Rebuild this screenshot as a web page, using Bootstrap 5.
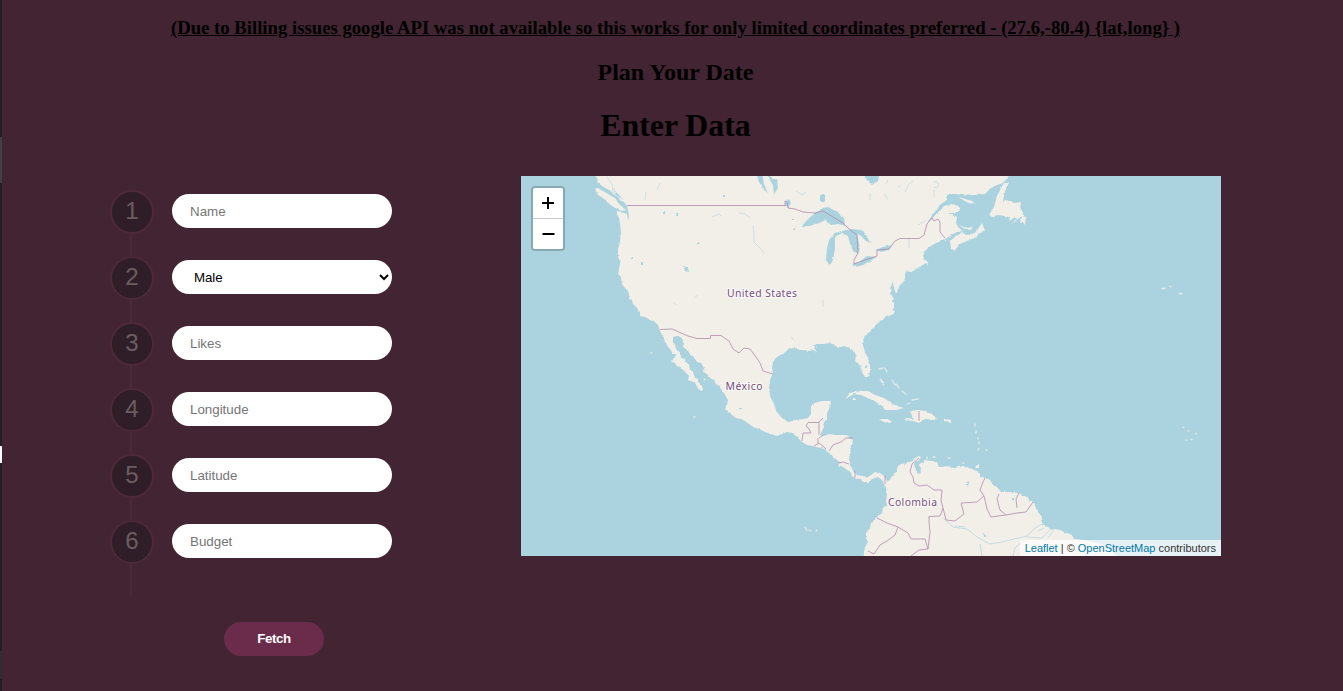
<!DOCTYPE html>
<html lang="en">
<head>
<meta charset="utf-8">
<meta name="viewport" content="width=device-width, initial-scale=1">
<title>Plan Your Date</title>
<link href="https://cdn.jsdelivr.net/npm/bootstrap@5.3.0/dist/css/bootstrap.min.css" rel="stylesheet">
<style>
  body { background:#422432; color:#000; font-family:"Liberation Serif",serif; overflow:hidden; height:691px; }
  .edge { width:2px; background:#231f22; flex:none; }
  .edge .grip { height:46px; margin-top:137px; background:#424142; }
  .edge .mark-on { height:17px; margin-top:263px; background:#fff; }
  .edge .foot { height:28px; margin-top:188px; background:#302d2f; }
  .page { padding:17px 0 0 6px; }
  h1,h2,h3 { font-weight:700; margin:0; line-height:normal; }
  h3 { font-size:18.72px; line-height:21px; text-decoration:underline; }
  h2 { font-size:24px; line-height:27px; margin-top:21px; }
  h1 { font-size:31.8px; line-height:36px; margin-top:22px; }
  .planner { margin-top:32px; padding-left:102px; }
  .entry { width:411px; padding-top:14px; flex:none; font-family:"Liberation Sans",Arial,sans-serif; }
  .step { height:66px; }
  .num-col { width:44px; flex:none; }
  .num { width:44px; height:44px; border:2px solid #4e293b; background:#2f1e28; color:#6b5d61; font-size:24px; line-height:38px; text-align:center; flex:none; }
  .rail { width:2px; margin-left:20px; background:#4b283a; }
  .field { width:220px; height:34px; margin:4px 0 0 18px; border:0; border-radius:17px; padding:1px 18px; font-size:13.333px; background:#fff; color:#000; line-height:normal; }
  .field::placeholder { color:#757575; opacity:1; }
  select.field { padding:1px 0 1px 18px; letter-spacing:-.1px; }
  .fetch { width:100px; height:34px; margin:25px 0 0 114px; border:0; border-radius:17px; background:#6b2b4a; color:#fff; font-size:13.333px; font-weight:700; letter-spacing:-.4px; padding:0; }
  .map { width:700px; height:380px; background:#aad3df; flex:none; font-family:"Liberation Sans",Arial,sans-serif; }
  .zoomer { top:10px; left:10px; width:34px; border:2px solid rgba(0,0,0,.2); border-radius:4px; background-clip:padding-box; overflow:hidden; }
  .zoomer div { height:30px; background:#fff; }
  .zoomer div:first-child { height:31px; border-bottom:1px solid #ccc; }
  .credit { right:0; bottom:0; background:rgba(255,255,255,.7); color:#333; font-size:11px; line-height:16px; padding:0 5px; white-space:nowrap; }
  .credit a { color:#0078a8; text-decoration:none; }
</style>
</head>
<body class="d-flex">
<div class="edge"><div class="grip"></div><div class="mark-on"></div><div class="foot"></div></div>
<main class="page flex-grow-1">
  <header class="text-center">
    <h3>(Due to Billing issues google API was not available so this works for only limited coordinates preferred - (27.6,-80.4) {lat,long} )</h3>
    <h2>Plan Your Date</h2>
    <h1>Enter Data</h1>
  </header>
  <div class="planner d-flex">
    <form class="entry" onsubmit="return false">
      <div class="step d-flex"><div class="num-col d-flex flex-column"><div class="num rounded-circle">1</div><div class="rail flex-grow-1"></div></div><input class="field" placeholder="Name"></div>
      <div class="step d-flex"><div class="num-col d-flex flex-column"><div class="num rounded-circle">2</div><div class="rail flex-grow-1"></div></div><select class="field"><option>Male</option><option>Female</option></select></div>
      <div class="step d-flex"><div class="num-col d-flex flex-column"><div class="num rounded-circle">3</div><div class="rail flex-grow-1"></div></div><input class="field" placeholder="Likes"></div>
      <div class="step d-flex"><div class="num-col d-flex flex-column"><div class="num rounded-circle">4</div><div class="rail flex-grow-1"></div></div><input class="field" placeholder="Longitude"></div>
      <div class="step d-flex"><div class="num-col d-flex flex-column"><div class="num rounded-circle">5</div><div class="rail flex-grow-1"></div></div><input class="field" placeholder="Latitude"></div>
      <div class="step d-flex"><div class="num-col d-flex flex-column"><div class="num rounded-circle">6</div><div class="rail flex-grow-1"></div></div><input class="field" placeholder="Budget"></div>
      <div class="d-flex"><div class="rail" style="height:11px"></div></div>
      <button class="fetch d-block">Fetch</button>
    </form>
    <div class="map position-relative">
      <svg class="d-block" width="700" height="380" viewBox="521 176 700 380">
        <!-- roughens the coastlines -->
        <filter id="coast" filterUnits="userSpaceOnUse" x="521" y="166" width="700" height="400" color-interpolation-filters="sRGB">
          <feTurbulence type="fractalNoise" baseFrequency=".28" numOctaves="2" seed="4"/>
          <feDisplacementMap in="SourceGraphic" scale="2.500" xChannelSelector="R" yChannelSelector="G"/>
        </filter>
        <g filter="url(#coast)">
        <!-- mainland -->
        <path fill="#f2efe9" d="M593 166L595 176 598 179 597 182 601 185 605 188 609 190 613 194 618 197 621 201 624 202 627 206 628 210 629 217 628 220 627 214 623 212 617 211 617 214 619 218 620 224 621 233 620 241 618 250 618 256 620 263 619 269 618 274 621 277 622 284 625 288 629 293 629 299 632 300 633 304 637 308 640 313 640 316 645 317 649 319 654 321 658 325 660 331 663 337 666 343 668 347 671 350 672 353 676 355 675 357 671 361 675 363 677 366 682 369 687 373 689 376 688 380 692 382 695 382 697 387 701 391 703 390 702 386 698 382 698 379 695 378 693 372 690 369 689 365 686 362 685 359 680 357 680 353 676 349 675 345 673 342 673 337 677 336 682 338 683 342 683 346 687 350 690 354 694 357 697 362 701 363 704 368 703 372 707 374 710 378 714 380 717 384 721 389 725 395 728 400 727 405 725 408 729 412 732 415 736 418 743 420 748 423 753 427 759 429 765 432 771 434 777 436 782 434 787 432 793 433 798 438 802 442 807 445 813 446 820 448 825 449 828 452 832 455 834 459 838 462 839 467 843 467 847 470 851 472 852 476 856 479 860 478 863 482 867 482 868 484 870 480 875 478 878 477 882 480 884 484 886 488 887 495 886 501 887 505 883 508 882 513 877 517 873 521 871 523 870 528 866 533 866 538 868 542 865 547 864 553 863 566H1117L1117 556 1106 547 1097 543 1083 540 1074 539 1072 535 1066 533 1060 530 1055 529 1051 530 1048 527 1042 525 1042 517 1038 512 1035 506 1033 502 1025 496 1018 493 1010 492 1001 492 997 487 993 485 990 480 986 478 980 477 979 472 972 469 964 466 954 468 947 466 942 467 939 467 937 462 931 461 925 460 921 463 917 466 918 472 921 471 920 474 917 472 915 468 914 464 919 460 921 457 918 456 915 459 911 461 908 463 901 464 897 467 897 472 892 476 890 480 887 481 884 476 880 473 875 472 871 475 868 477 862 476 857 475 853 471 851 466 849 459 850 453 851 446 853 440 849 438 847 435 843 435 836 435 829 434 824 436 820 435 822 431 824 427 823 423 827 420 827 413 829 409 830 403 832 401 828 401 822 401 814 403 811 407 811 414 808 418 804 419 796 420 788 422 782 418 777 412 773 402 770 396 769 388 770 380 773 373 772 368 773 362 777 357 784 353 788 349 794 348 800 350 804 350 809 351 813 350 817 352 814 348 817 346 812 346 817 344 823 344 830 343 834 345 839 348 844 346 849 348 853 351 856 355 855 361 860 365 862 372 865 377 869 377 870 372 870 366 868 358 865 352 863 345 863 340 866 335 872 330 877 324 879 321 883 320 886 316 892 315 895 311 892 310 894 308 894 303 892 301 894 299 892 296 890 291 892 291 890 287 892 284 892 281 894 287 895 292 897 293 899 287 901 284 905 280 905 275 906 271 913 269 920 267 926 263 928 266 927 261 924 260 923 256 925 251 929 247 936 243 944 240 951 235 957 232 963 231 958 227 956 223 957 217 955 216 952 215 948 213 953 213 959 212 960 208 957 205 951 204 944 206 937 213 930 221 927 223 933 214 941 204 947 200 947 195 951 194 961 194 973 195 985 194 991 188 997 185 1003 183 1009 176V166Z"/>
        <!-- islands -->
        <g fill="#f2efe9">
          <path d="M1009 183L1004 183 1001 188 997 196 994 207 989 215 992 217 998 215 1005 216 1010 217 1009 221 1015 217 1016 219 1011 224 1018 219 1022 216 1020 223 1023 222 1025 225 1026 217 1023 216 1023 211 1020 209 1021 202 1013 203 1008 200 1003 202 1004 195 1006 188Z"/>
          <path d="M950 241L956 236 961 233 967 235 975 233 982 223 984 228 985 231 978 234 977 237 967 241 960 244 955 250 951 249Z"/>
          <path d="M959 197L965 199 972 201 975 204 969 203 963 200ZM960 225L966 228 973 227 970 230 963 228Z"/>
          <path d="M595 189L598 188 608 194 615 198 620 205 626 210 622 211 615 208 608 203 603 198 598 195Z"/>
          <path d="M904 271L911 269 919 268 911 272Z"/>
          <path d="M845 399L850 393 859 391 868 391 875 395 884 398 891 403 897 406 904 408 896 410 885 410 882 406 876 402 868 398 861 395 854 394Z"/>
          <path d="M903 420L909 418 914 420 910 411 918 410 926 411 932 414 937 419 933 420 925 419 919 423 913 421Z"/>
          <path d="M880 419L887 419 892 421 890 423 883 422ZM944 419L952 420 951 422 944 421ZM976 466L979 464 979 468 975 468ZM880 378L883 381 885 386 881 382ZM853 398h3v2h-3Z"/>
        </g>
        <!-- lakes and bays -->
        <g fill="#aad3df">
          <path d="M802 226L809 218 818 211 823 208 828 207 836 211 844 218 845 226 838 224 831 225 826 220 819 223 810 226Z"/>
          <path d="M829 239L835 233 842 231 851 229 860 230 864 232 868 239 872 243 866 241 860 235 857 234 860 248 858 254 853 251 850 244 848 236 842 233 835 237 835 248 833 260 829 265 826 260 827 249Z"/>
          <path d="M852 264L859 262 867 256 876 257 872 260 863 265 856 267ZM876 250L883 247 892 245 889 250 881 252ZM820 195q3-2 5 0v5q-2 3-5 1ZM863 170h16v6l-1 5-6 4-5-5Z"/>
          <path d="M756 172l3 10 4 6 5 6-4-10-2-12ZM768 172l5 8 4-1 1 9-4 6-1-9-3-5Z"/>
          <path d="M683 265l5 3 1 4-4-1ZM784 205l5-6 2 4-3 5ZM613 187l3 5 8 8-8-5ZM917 463l4 5-1 6-4-3ZM834 457l4 4 3 3-5-2ZM966 483l3-2-1 6ZM983 534l5 2-4 1ZM1012 498h2v2h-2ZM865 366h2v2h-2ZM631 257h2v2h-2ZM641 262h2v3h-2ZM792 219h4v1h-4ZM793 228h2v2h-2ZM663 211h2v3h-2ZM676 213h2v3h-2ZM723 195h2v2h-2ZM697 242h2v2h-2ZM738 408h4v1h-4Z"/>
        </g>
        </g>
        <!-- small islands -->
        <path stroke="#f2efe9" stroke-width="1.3" fill="none" stroke-linecap="round" opacity=".8" d="M879 369l4-1M885 368l2 4M892 380l3 5M896 384l3 4M902 391l4 3M907 404l3-1M912 400l6-1M975 424v2M976 431v2M978 438v1M979 442v2M979 448l-1 2M986 450h1M963 463h1M948 458h2M927 457v2M933 457h2M805 527l2 3M809 530l2 1M816 531l1-1M1162 288.500h3M1170 286.500h1M1179 293.500h3M1183 427.500h1M1188 431h1M1196 433v1M1186 440h1M1191 439.500h1M704 380l1-1M694 417h1M651 353h1M658 323h2"/>
        <!-- rivers -->
        <g fill="none" stroke="#aad3df" stroke-width=".8" opacity=".65">
          <path d="M607 177l5 7 1 8 5 4M646 192l-1 8M657 190l3-7M712 217l7-3 2 2M739 213l6 1 5 4M753 225l1 10 0 7 7 7 3 5M796 191l6 4 4-3M905 192l4-8 4-3M884 193l4 7M934 183q3-4 4 1t-4 3M918 225l7-4M909 239v9M864 232l-4-3M823 300v7M674 303l2 2M694 298l4-3M791 337l4 4M870 193v7M888 180l-2 4M934 190v7M898 187l3-2"/>
          <path stroke-width="1" opacity="1" d="M943 518l10 9 14 2 10 8 13 7 12-2 12-3 13-3 8-8 7-4M955 526l10 1M980 544l2 12M1024 540l-9 8-2 8M1038 531l6-3M1050 530l-8 8-15-1M985 535l-3-2M1048 538l6-8"/>
        </g>
        <!-- country borders -->
        <g fill="none" stroke="#b38bad" stroke-width="1" opacity=".8">
          <path d="M627 205.500H785V201L787 202 788 208 795 209 803 212 815 213 823 211 833 217 843 223 848 228 857 235 858 253 854 260 854 264 865 260 877 256 877 250 889 249 895 241 900 238.500H919L924 235 927 224 932 218 934 221 938 219 940 222 940 232 945 238"/>
          <path d="M660 329.500L672 329 688 336 697 338.500H710.500V335.500H721L729 341 733 349 739 353 744 348 750 349 756 357 760 363 763 371 773 374"/>
          <path d="M802 441L803 433 811 433 809 429 806 426 808 422.500H819V435M819 422L823 418M819 438L823 435M814 446L819 443 824 447 826 449M818 438L818 443M829 451L833 445 841 442 846 438 853 438M838 463L843 462 849 464M855 471V478M885 476L885 484M919 411V421"/>
          <path d="M919 458L912 464 910 472 913 477 914 483 919 486 927 485 934 490H942L941 500 943 508 940 516 929 516.500V522L930 532 928 549 919 550 911 556M943 508L946 520 955 521 964 514 961 503 977 502 984 496 980 490 983 482 985 478M984 496L987 509 991 517 1006 515 1017 513 1026 512 1033 502M999 494L997 499 1000 510 1006 515M1019 493L1016 499 1017 508M877 518L887 523 898 527 908 533 911 539 925 539 928 549M898 527L895 535 887 541 880 545 874 554 868 551"/>
        </g>
        <g font-family="'Noto Sans','Open Sans',sans-serif" font-size="10.400" fill="#754c79" stroke="#fff" stroke-opacity=".75" stroke-width="2" paint-order="stroke" stroke-linejoin="round">
          <text x="727" y="297" textLength="70">United States</text>
          <text x="725.500" y="390" textLength="37">México</text>
          <text x="888" y="506" textLength="49">Colombia</text>
        </g>
      </svg>
      <div class="zoomer position-absolute">
        <div><svg class="d-block" width="30" height="30"><path d="M9 15h12M15 9v12" stroke="#000" stroke-width="2"/></svg></div>
        <div><svg class="d-block" width="30" height="30"><path d="M9.500 15h12" stroke="#000" stroke-width="2"/></svg></div>
      </div>
      <div class="credit position-absolute"><a href="#">Leaflet</a> | © <a href="#">OpenStreetMap</a> contributors</div>
    </div>
  </div>
</main>
<script src="https://cdn.jsdelivr.net/npm/bootstrap@5.3.0/dist/js/bootstrap.bundle.min.js"></script>
</body>
</html>
